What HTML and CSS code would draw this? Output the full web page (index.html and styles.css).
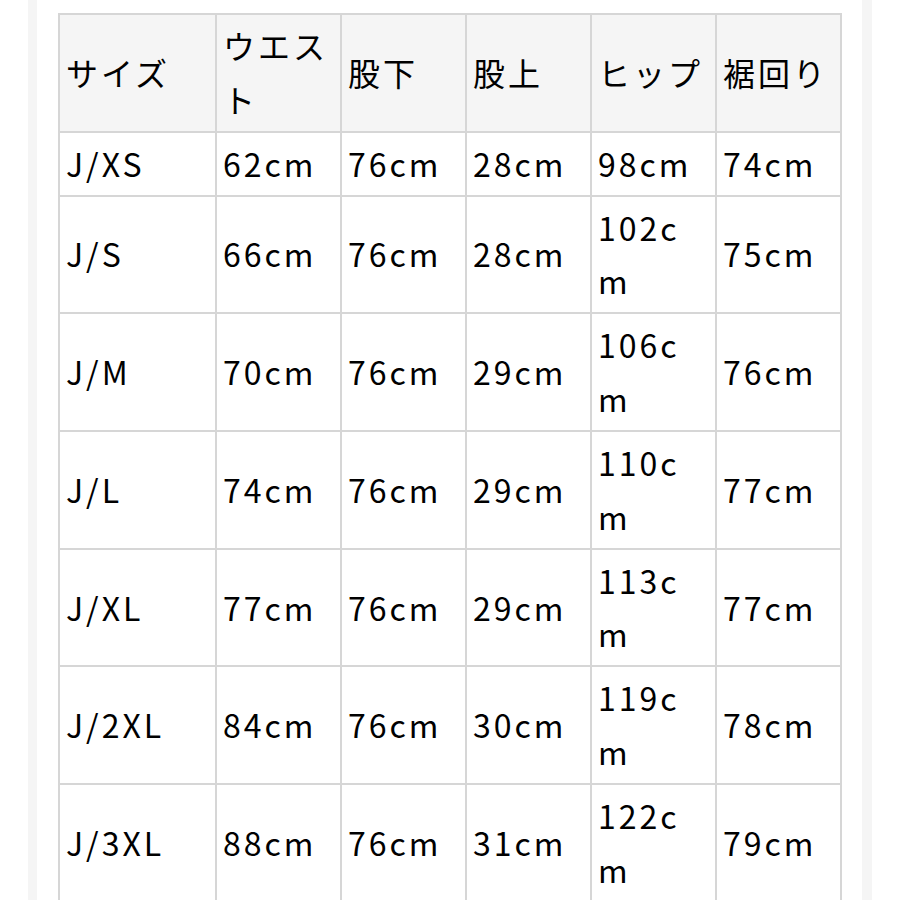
FILE: index.html
```html
<!DOCTYPE html>
<html lang="ja">
<head>
<meta charset="utf-8">
<title>サイズ表</title>
<link rel="stylesheet" href="styles.css">
</head>
<body>
<div class="page">
  <div class="panel">
    <table class="size-table">
      <colgroup>
        <col class="c-size">
        <col class="c-val"><col class="c-val"><col class="c-val"><col class="c-val"><col class="c-val">
      </colgroup>
      <thead>
        <tr><th>サイズ</th><th>ウエスト</th><th>股下</th><th>股上</th><th>ヒップ</th><th>裾回り</th></tr>
      </thead>
      <tbody>
        <tr><td>J/XS</td><td>62cm</td><td>76cm</td><td>28cm</td><td>98cm</td><td>74cm</td></tr>
        <tr><td>J/S</td><td>66cm</td><td>76cm</td><td>28cm</td><td>102cm</td><td>75cm</td></tr>
        <tr><td>J/M</td><td>70cm</td><td>76cm</td><td>29cm</td><td>106cm</td><td>76cm</td></tr>
        <tr><td>J/L</td><td>74cm</td><td>76cm</td><td>29cm</td><td>110cm</td><td>77cm</td></tr>
        <tr><td>J/XL</td><td>77cm</td><td>76cm</td><td>29cm</td><td>113cm</td><td>77cm</td></tr>
        <tr><td>J/2XL</td><td>84cm</td><td>76cm</td><td>30cm</td><td>119cm</td><td>78cm</td></tr>
        <tr><td>J/3XL</td><td>88cm</td><td>76cm</td><td>31cm</td><td>122cm</td><td>79cm</td></tr>
      </tbody>
    </table>
  </div>
</div>
</body>
</html>
```
FILE: styles.css
```css
html, body {
  margin: 0;
  padding: 0;
  background: #ffffff;
}
.page {
  width: 900px;
  height: 900px;
  overflow: hidden;
  padding: 0 28px;
  box-sizing: border-box;
}
.panel {
  height: 100%;
  border-left: 9px solid #f5f5f5;
  border-right: 10px solid #f5f5f5;
  padding: 13px 0 0 21px;
  background: #fff;
}
.size-table {
  border-collapse: collapse;
  table-layout: fixed;
  width: 784px;
  font-family: "Noto Sans CJK JP", "Noto Sans", sans-serif;
  font-size: 32px;
  line-height: 53.85px;
  letter-spacing: 3px;
  color: #000000;
}
.c-size { width: 157px; }
.c-val { width: 125px; }
.size-table th,
.size-table td {
  border: 2px solid #d6d6d6;
  padding: 4px 7px 4px 6px;
  text-align: left;
  vertical-align: middle;
  font-weight: normal;
  word-break: break-all;
  overflow-wrap: anywhere;
}
.size-table thead th {
  background: #f5f5f5;
}
```
